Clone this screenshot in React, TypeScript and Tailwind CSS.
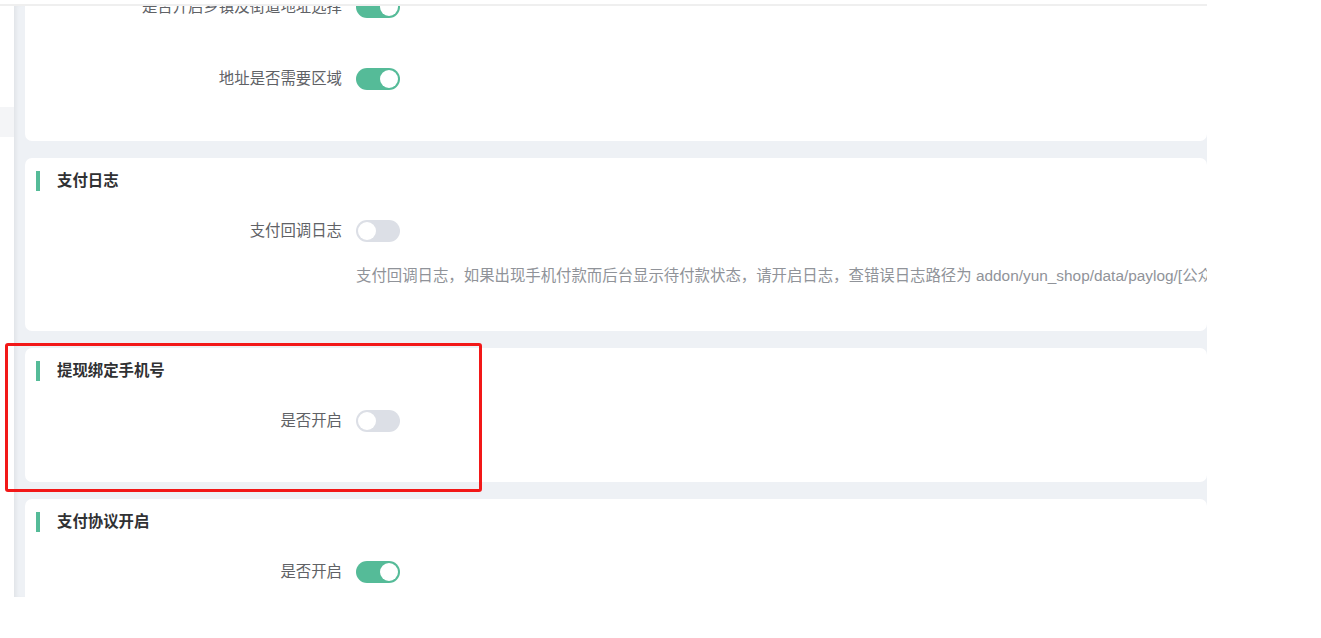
import React from 'react';

interface Row {
  label: string;
  on: boolean;
  help?: string;
}

interface Section {
  title: string;
  rows: Row[];
  pb: string;
}

const sections: Section[] = [
  {
    title: '地址设置',
    rows: [
      { label: '是否开启乡镇及街道地址选择', on: true },
      { label: '地址是否需要区域', on: true },
    ],
    pb: 'pb-[42px]',
  },
  {
    title: '支付日志',
    rows: [
      {
        label: '支付回调日志',
        on: false,
        help: '支付回调日志，如果出现手机付款而后台显示待付款状态，请开启日志，查错误日志路径为 addon/yun_shop/data/paylog/[公众号ID]/[日期].log',
      },
    ],
    pb: 'pb-[45px]',
  },
  {
    title: '提现绑定手机号',
    rows: [{ label: '是否开启', on: false }],
    pb: 'pb-[41px]',
  },
  {
    title: '支付协议开启',
    rows: [{ label: '是否开启', on: true }],
    pb: 'pb-[41px]',
  },
];

function Toggle({ on }: { on: boolean }) {
  return (
    <div
      className={
        'relative w-[44px] h-[22px] rounded-full shrink-0 ' +
        (on ? 'bg-[#55bb98]' : 'bg-[#dcdfe6]')
      }
    >
      <div
        className={
          'absolute top-[2px] w-[18px] h-[18px] rounded-full bg-white ' +
          (on ? 'left-[24px]' : 'left-[2px]')
        }
      />
    </div>
  );
}

function Card({ section }: { section: Section }) {
  return (
    <div className={'bg-white rounded-[7px] ' + section.pb}>
      {/* title */}
      <div className="h-[46px] flex items-center pl-[11px]">
        <div className="w-[4px] h-[20px] bg-[#55bb98]" />
        <span className="ml-[17px] text-[15.4px] font-bold text-[#303133]">{section.title}</span>
      </div>

      <div className="pt-[7px] flex flex-col gap-[32px]">
        {section.rows.map((row) => (
          <div key={row.label}>
            <div className="flex items-center h-10">
              <label className="w-[331px] pr-[14px] text-right text-[15.4px] text-[#606266] shrink-0">
                {row.label}
              </label>
              <Toggle on={row.on} />
            </div>
            {row.help && (
              <div className="ml-[331px] mt-[15px] leading-5 text-[15.4px] text-[#909399] whitespace-nowrap">
                {row.help}
              </div>
            )}
          </div>
        ))}
      </div>
    </div>
  );
}

export default function App() {
  return (
    <div className="w-[1321px] h-[638px] bg-white font-['Liberation_Sans','Noto_Sans_CJK_SC',sans-serif]">
      <div className="relative w-[1207px] h-[597px] flex flex-col overflow-hidden bg-white">
        {/* top bar */}
        <div className="h-[6px] shrink-0 bg-white border-b-2 border-[#efefef] relative z-10" />

        <div className="flex flex-1 min-h-0">
          {/* sidebar edge */}
          <aside className="w-[14px] shrink-0 bg-white">
            <div className="mt-[101px] h-[30px] bg-[#f4f5f7]" />
          </aside>

          {/* main */}
          <main className="flex-1 min-w-0 overflow-hidden bg-[#eef1f5] pl-[11px] shadow-[inset_4px_0_4px_-2px_rgba(0,0,0,0.06)]">
            <div className="-mt-[72px] flex flex-col gap-[17px]">
              {sections.map((s) => (
                <Card key={s.title} section={s} />
              ))}
            </div>
          </main>
        </div>

        {/* annotation */}
        <div className="absolute left-[5px] top-[343px] w-[477px] h-[149px] border-[3px] border-[#f21818] rounded-[3px]" />
      </div>
    </div>
  );
}
